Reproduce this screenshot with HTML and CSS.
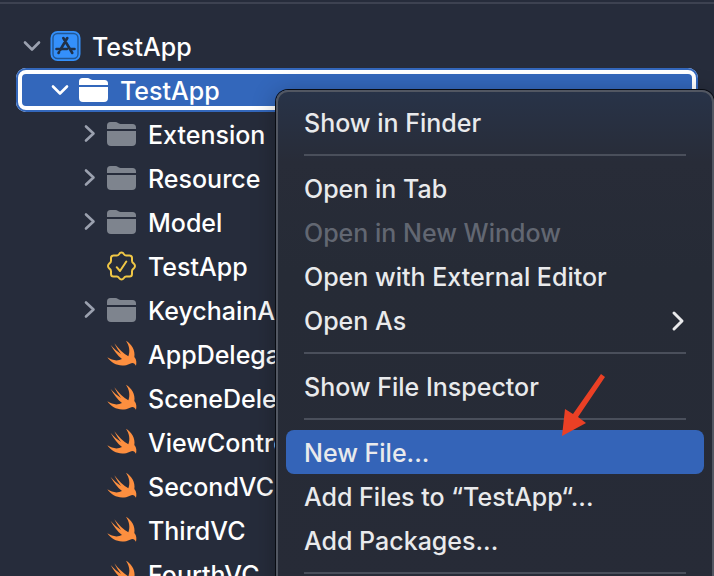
FILE: index.html
```
<!DOCTYPE html>
<html lang="en">
<head>
<meta charset="utf-8">
<meta name="viewport" content="width=device-width, initial-scale=1">
<title>TestApp</title>
<link rel="stylesheet" href="styles.css">
</head>
<body>
<svg class="defs" aria-hidden="true">
  <symbol id="down" viewBox="0 0 24 24"><path d="M5 8.500 12 15.500 19 8.500" fill="none" stroke="currentColor" stroke-width="2.600" stroke-linecap="round" stroke-linejoin="round"/></symbol>
  <symbol id="right" viewBox="0 0 24 24"><path d="M10 4.500 17.500 11.500 10 18.500" fill="none" stroke="currentColor" stroke-width="2.600" stroke-linecap="round" stroke-linejoin="round"/></symbol>
  <symbol id="folder" viewBox="0 0 32 32"><path d="M1 11V7.500Q1 4 4.500 4H9.500Q11 4 12 5L13 5.600Q13.500 6 14.500 6H26.500Q30 6 30 9.500V11Z M1 13H30V24Q30 28 26 28H5Q1 28 1 24Z" fill="currentColor"/></symbol>
  <symbol id="app" viewBox="0 0 32 32">
    <rect x="0.500" y="1" width="30" height="30" rx="7" fill="#3490fb"/>
    <rect x="3" y="3.500" width="25" height="25" rx="4.500" fill="none" stroke="#215795" stroke-width="1.400"/>
    <path d="M13.300 8 22.300 23M17.300 8 10.200 20M6.500 19H17M20.500 19H24.500M9 22.200 8.500 23" fill="none" stroke="#203047" stroke-width="2.600" stroke-linecap="round"/>
  </symbol>
  <symbol id="seal" viewBox="0 0 32 32">
    <path d="M15.500 2.500Q17 2.500 18 4.200Q19 5.700 20.500 5.500H23.500Q26 5.500 26 8V10.700Q26 12.300 27.500 13.300Q30.500 16 27.500 18.700Q26 19.700 26 21.300V24Q26 26.500 23.500 26.500H20.500Q19 26.300 18 27.800Q15.500 31 13 27.800Q12 26.300 10.500 26.500H7.500Q5 26.500 5 24V21.300Q5 19.700 3.500 18.700Q0.500 16 3.500 13.300Q5 12.300 5 10.700V8Q5 5.500 7.500 5.500H10.500Q12 5.700 13 4.200Q14 2.500 15.500 2.500Z" fill="none" stroke="currentColor" stroke-width="2" stroke-linejoin="round"/>
    <path d="M10.700 17.200 14 21 20.300 11.500" fill="none" stroke="currentColor" stroke-width="2" stroke-linecap="round" stroke-linejoin="round"/>
  </symbol>
  <symbol id="swift" viewBox="78 91 96 96">
    <path d="M138 99C154 108 167 128 163 148C170 156 170 166 168 174C164 167 159 163 150 168C124 181 96 170 82 149C97 159 113 161 126 154C113 145 101 128 92 112C101 123 112 132 123 139C117 131 109 120 103 107C116 124 131 138 145 146C151 130 148 114 138 99Z" fill="currentColor"/>
  </symbol>
</svg>

<main class="navigator">
  <ul class="tree" aria-label="Project navigator">
    <li class="row"><svg class="chevron"><use href="#down"/></svg><svg class="icon"><use href="#app"/></svg><span class="name">TestApp</span></li>
    <li class="row level-1 selected"><svg class="chevron"><use href="#down"/></svg><svg class="icon"><use href="#folder"/></svg><span class="name">TestApp</span></li>
    <li class="row level-2"><svg class="chevron"><use href="#right"/></svg><svg class="icon"><use href="#folder"/></svg><span class="name">Extension</span></li>
    <li class="row level-2"><svg class="chevron"><use href="#right"/></svg><svg class="icon"><use href="#folder"/></svg><span class="name">Resource</span></li>
    <li class="row level-2"><svg class="chevron"><use href="#right"/></svg><svg class="icon"><use href="#folder"/></svg><span class="name">Model</span></li>
    <li class="row level-2"><i class="chevron"></i><svg class="icon seal"><use href="#seal"/></svg><span class="name">TestApp</span></li>
    <li class="row level-2"><svg class="chevron"><use href="#right"/></svg><svg class="icon"><use href="#folder"/></svg><span class="name">KeychainAc</span></li>
    <li class="row level-2"><i class="chevron"></i><svg class="icon swift"><use href="#swift"/></svg><span class="name">AppDelega</span></li>
    <li class="row level-2"><i class="chevron"></i><svg class="icon swift"><use href="#swift"/></svg><span class="name">SceneDele</span></li>
    <li class="row level-2"><i class="chevron"></i><svg class="icon swift"><use href="#swift"/></svg><span class="name">ViewContro</span></li>
    <li class="row level-2"><i class="chevron"></i><svg class="icon swift"><use href="#swift"/></svg><span class="name">SecondVC</span></li>
    <li class="row level-2"><i class="chevron"></i><svg class="icon swift"><use href="#swift"/></svg><span class="name">ThirdVC</span></li>
    <li class="row level-2"><i class="chevron"></i><svg class="icon swift"><use href="#swift"/></svg><span class="name">FourthVC</span></li>
  </ul>

  <div class="menu" role="menu">
    <button class="item" role="menuitem">Show in Finder</button>
    <hr>
    <button class="item" role="menuitem">Open in Tab</button>
    <button class="item" role="menuitem" disabled>Open in New Window</button>
    <button class="item" role="menuitem">Open with External Editor</button>
    <button class="item" role="menuitem" aria-haspopup="menu">Open As<svg class="submenu" viewBox="0 0 16 24" aria-hidden="true"><path d="M4 4 12 12 4 20" fill="none" stroke="currentColor" stroke-width="3" stroke-linecap="round" stroke-linejoin="round"/></svg></button>
    <hr>
    <button class="item" role="menuitem">Show File Inspector</button>
    <hr>
    <button class="item active" role="menuitem">New File...</button>
    <button class="item" role="menuitem">Add Files to “TestApp“...</button>
    <button class="item" role="menuitem">Add Packages...</button>
    <hr>
    <svg class="pointer" viewBox="0 0 46 64" aria-hidden="true"><path d="M41 1 45 4 18 44 26 50 2 63 5 36 13 41Z" fill="#ea4025"/></svg>
  </div>
</main>
</body>
</html>
```
FILE: styles.css
```
* {
  box-sizing: border-box;
}

body {
  margin: 0;
  height: 100vh;
  overflow: hidden;
  background: #262c3b;
  color: #fff;
  font: 500 25px/42px Inter, "Liberation Sans", sans-serif;
}

.defs {
  position: absolute;
  width: 0;
  height: 0;
}

.navigator {
  position: relative;
  height: 100%;
  padding-top: 2px;
  overflow: hidden;
}

.tree {
  margin: 0;
  padding: 20px 16px 0;
  border-top: 2px solid #3d4251;
  list-style: none;
}

.row {
  display: flex;
  align-items: center;
  height: 44px;
  padding-left: 4px;
  white-space: nowrap;
}

.level-1 {
  padding-left: 32px;
}

.level-2 {
  padding-left: 60px;
}

.name {
  padding-top: 2px;
}

.chevron {
  flex: none;
  width: 24px;
  height: 24px;
  margin-right: 6px;
  color: #9ba1af;
}

.icon {
  flex: none;
  width: 32px;
  height: 32px;
  margin-right: 10px;
  color: #7e848e;
}

.seal {
  color: #f0c746;
}

.swift {
  color: #fd8f3f;
}

.selected {
  border-radius: 10px;
  background: #3367bb;
  box-shadow: inset 0 0 0 2px #3367bb, inset 0 0 0 6px #fff;
}

.selected .chevron,
.selected .icon {
  color: #fff;
}

.menu {
  position: absolute;
  top: 90px;
  right: 0;
  left: 276px;
  padding: 8px;
  border: 2px solid #525762;
  border-radius: 12px;
  background: linear-gradient(#283348, #282c38 70px, #262b36 180px, #272b37);
  box-shadow: 0 0 0 1px #080b12, 0 4px 24px rgba(0, 0, 0, 0.3);
}

.item {
  display: flex;
  align-items: center;
  justify-content: space-between;
  width: 100%;
  height: 44px;
  padding: 2px 18px 0;
  border: 0;
  border-radius: 8px;
  background: none;
  color: #e9eaec;
  font: inherit;
  text-align: left;
  white-space: nowrap;
}

.item:disabled {
  color: #626772;
}

.active {
  background: #3464b8;
}

.submenu {
  width: 16px;
  height: 24px;
}

hr {
  height: 2px;
  margin: 10px 18px;
  border: 0;
  background: #4a4f5b;
}

.pointer {
  position: absolute;
  top: 281px;
  left: 282px;
  width: 46px;
  height: 64px;
}
```
